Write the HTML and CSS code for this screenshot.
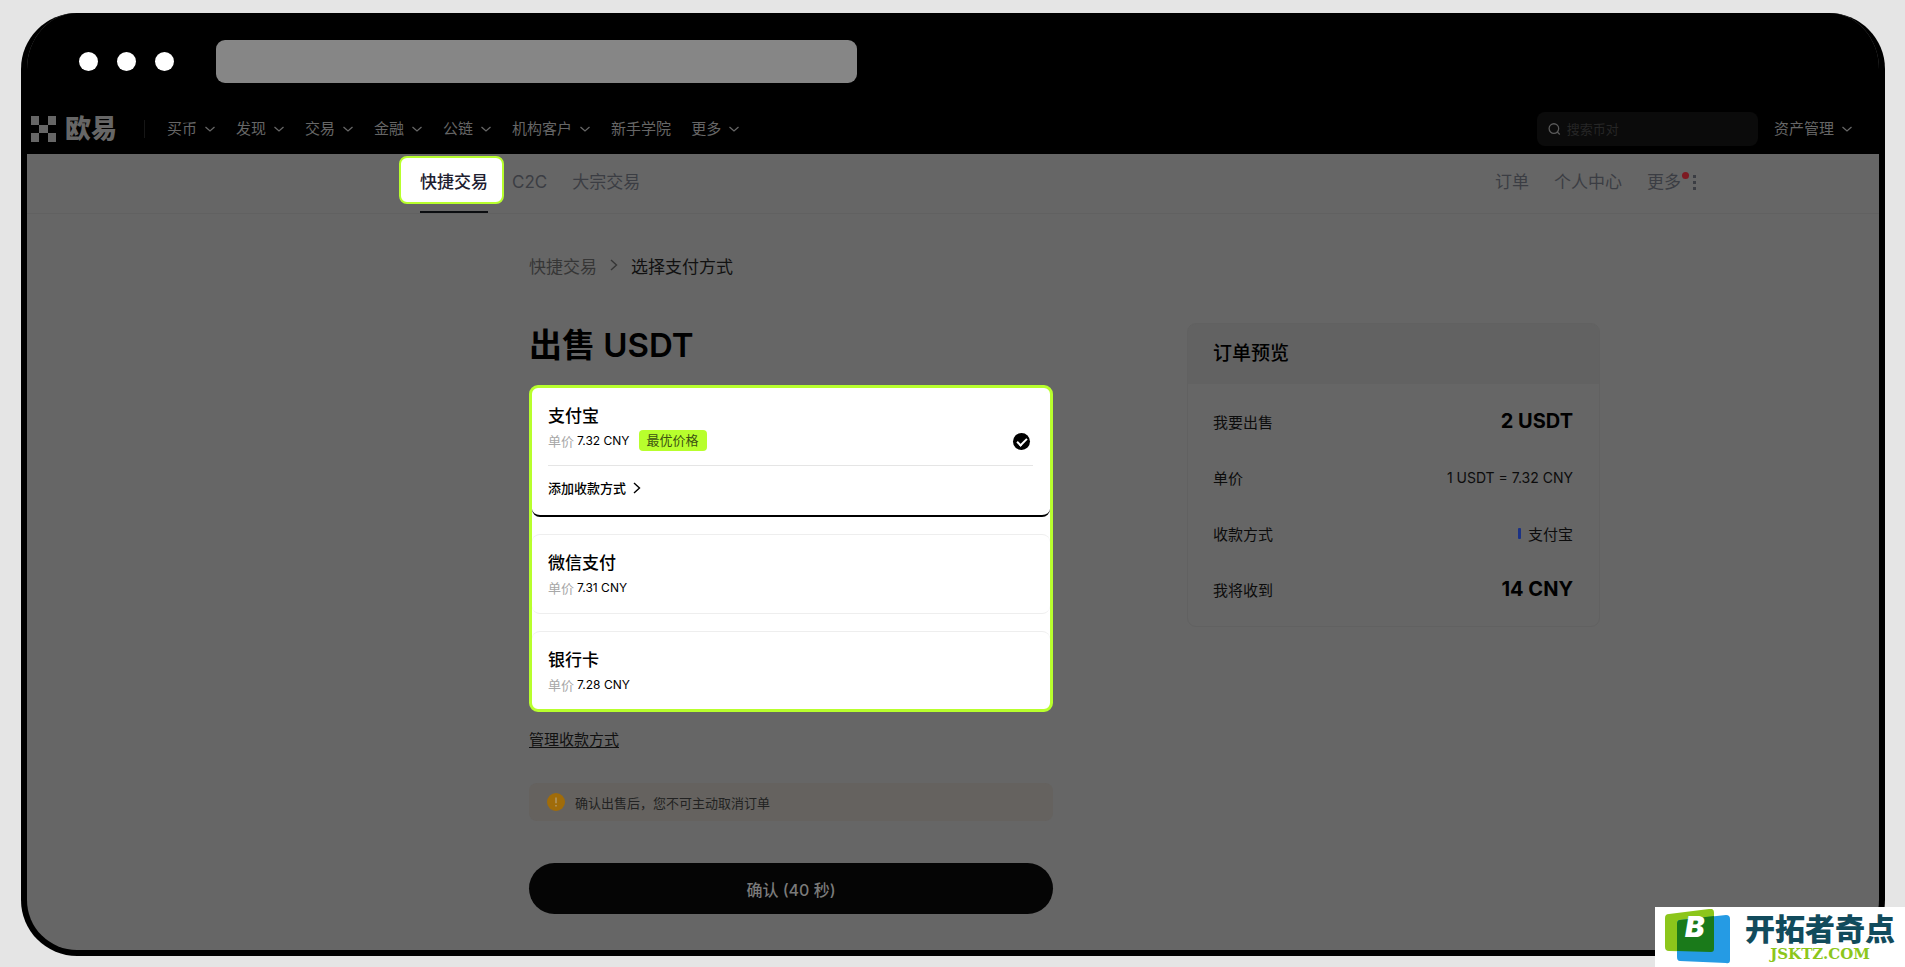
FILE: index.html
```html
<!DOCTYPE html>
<html lang="zh-CN">
<head>
    <meta charset="UTF-8">
    <meta name="viewport" content="width=device-width, initial-scale=1.0">
    <title>出售 USDT</title>
    <link rel="stylesheet" href="styles.css">
</head>
<body>
    <!-- shared icons -->
    <svg class="defs" width="0" height="0">
        <symbol id="down" viewBox="0 0 12 12"><path d="M1.5 4 L6 8 L10.5 4" fill="none" stroke="currentColor" stroke-width="1.3"/></symbol>
        <symbol id="right" viewBox="0 0 12 12"><path d="M3 1 L8.5 6 L3 11" fill="none" stroke="currentColor" stroke-width="1.4"/></symbol>
    </svg>

    <div class="browser">
        <div class="chrome">
            <span class="dot"></span>
            <span class="dot"></span>
            <span class="dot"></span>
            <div class="address"></div>
        </div>

        <header class="topnav">
            <a class="logo" href="#">
                <svg width="25" height="26" viewBox="0 0 25 26" fill="currentColor">
                    <rect x="0" y="0" width="8" height="9"/>
                    <rect x="17" y="0" width="8" height="9"/>
                    <rect x="8" y="9" width="9" height="8"/>
                    <rect x="0" y="17" width="8" height="9"/>
                    <rect x="17" y="17" width="8" height="9"/>
                </svg>
                欧易
            </a>
            <nav class="menu">
                <a href="#">买币<svg><use href="#down"/></svg></a>
                <a href="#">发现<svg><use href="#down"/></svg></a>
                <a href="#">交易<svg><use href="#down"/></svg></a>
                <a href="#">金融<svg><use href="#down"/></svg></a>
                <a href="#">公链<svg><use href="#down"/></svg></a>
                <a href="#">机构客户<svg><use href="#down"/></svg></a>
                <a href="#">新手学院</a>
                <a href="#">更多<svg><use href="#down"/></svg></a>
            </nav>
            <label class="search">
                <svg width="14" height="14" viewBox="0 0 14 14" fill="none" stroke="currentColor" stroke-width="1.4"><circle cx="6.5" cy="6.5" r="5.3"/><path d="M10.3 10.3 L13 13"/></svg>
                <input type="text" placeholder="搜索币对" aria-label="搜索币对">
            </label>
            <nav class="menu">
                <a href="#">资产管理<svg><use href="#down"/></svg></a>
            </nav>
        </header>

        <div class="subnav">
            <nav class="tabs">
                <a class="active" href="#">快捷交易</a>
                <a href="#">C2C</a>
                <a href="#">大宗交易</a>
            </nav>
            <nav class="links">
                <a href="#">订单</a>
                <a href="#">个人中心</a>
                <a class="more" href="#">更多<svg width="3" height="15" viewBox="0 0 3 15" fill="currentColor"><rect width="3" height="3"/><rect y="6" width="3" height="3"/><rect y="12" width="3" height="3"/></svg></a>
            </nav>
        </div>

        <main>
            <div class="crumbs">
                <a href="#">快捷交易</a>
                <svg><use href="#right"/></svg>
                <span>选择支付方式</span>
            </div>
            <div class="columns">
                <form class="sell">
                    <h1>出售 USDT</h1>
                    <div class="methods">
                        <div class="method selected">
                            <label for="alipay">
                                <span class="name">支付宝</span>
                                <span class="price"><i>单价</i>7.32 CNY<b>最优价格</b></span>
                            </label>
                            <input type="radio" name="method" id="alipay" checked>
                            <a class="add" href="#">添加收款方式<svg><use href="#right"/></svg></a>
                        </div>
                        <div class="method">
                            <label for="wechat">
                                <span class="name">微信支付</span>
                                <span class="price"><i>单价</i>7.31 CNY</span>
                            </label>
                            <input type="radio" name="method" id="wechat">
                        </div>
                        <div class="method">
                            <label for="bank">
                                <span class="name">银行卡</span>
                                <span class="price"><i>单价</i>7.28 CNY</span>
                            </label>
                            <input type="radio" name="method" id="bank">
                        </div>
                    </div>
                    <a class="manage" href="#">管理收款方式</a>
                    <div class="notice">
                        <svg width="18" height="18" viewBox="0 0 18 18"><circle cx="9" cy="9" r="9" fill="#a06c0a"/><path d="M9 4.5 V10.3 M9 12 V13.5" stroke="#b39a6c" stroke-width="1.4"/></svg>
                        确认出售后，您不可主动取消订单
                    </div>
                    <button type="submit">确认 (40 秒)</button>
                </form>

                <section class="preview">
                    <h2>订单预览</h2>
                    <dl>
                        <div><dt>我要出售</dt><dd class="big">2 USDT</dd></div>
                        <div><dt>单价</dt><dd>1 USDT = 7.32 CNY</dd></div>
                        <div><dt>收款方式</dt><dd class="pay">支付宝</dd></div>
                        <div><dt>我将收到</dt><dd class="big">14 CNY</dd></div>
                    </dl>
                </section>
            </div>
        </main>
    </div>

    <a class="watermark" href="#">
        <svg width="66" height="56" viewBox="0 0 66 56">
            <path d="M4 5 L44 0 Q49 -1 49 4 V40 Q49 43 46 43 L4 42 Q0 42 0 38 V9 Q0 5 4 5Z" fill="#8cc61b"/>
            <path d="M15 11 L61 6 Q65 6 65 10 V51 Q65 55 61 54 L15 52 Q12 52 12 48 V15 Q12 11 15 11Z" fill="#259be4"/>
            <path d="M15 11 L49 7 V40 Q49 43 46 43 L12 42 V15 Q12 11 15 11Z" fill="#1a7a1a"/>
            <text x="20" y="28" class="mark">B</text>
        </svg>
        <span>
            <strong>开拓者奇点</strong>
            <em>JSKTZ.COM</em>
        </span>
    </a>
</body>
</html>
```

FILE: styles.css
```css
* { box-sizing: border-box; }
body {
    margin: 0;
    padding: 13px 20px 11px 21px;
    background: #e5e5e5;
    font-family: Inter, "Noto Sans CJK SC", sans-serif;
    color: #000;
}
a { color: inherit; text-decoration: none; }
.defs { position: absolute; }

.browser {
    min-height: calc(100vh - 24px);
    border: 6px solid #000;
    border-top: 0;
    border-radius: 56px;
    background: #666;
    overflow: hidden;
}

/* window bar */
.chrome {
    display: flex;
    align-items: center;
    gap: 19px;
    height: 89px;
    padding: 8px 52px 0;
    background: #000;
}
.dot { width: 19px; height: 19px; border-radius: 50%; background: #fff; }
.address {
    width: 641px;
    height: 43px;
    margin-left: 23px;
    border-radius: 9px;
    background: #868686;
}

/* site header */
.topnav {
    display: flex;
    align-items: center;
    height: 52px;
    padding: 2px 26px 0 4px;
    background: #000;
    color: #666;
    font-size: 15px;
}
.logo {
    display: flex;
    align-items: center;
    gap: 9px;
    margin-right: 27px;
    font-size: 26px;
    font-weight: 900;
    line-height: 26px;
}
.menu { display: flex; gap: 20px; line-height: 18px; }
.menu a { display: flex; align-items: center; gap: 7px; }
.menu svg { width: 12px; height: 12px; }
.logo + .menu { padding-left: 22px; border-left: 1px solid #161616; }
.search {
    display: flex;
    align-items: center;
    gap: 6px;
    width: 221px;
    height: 34px;
    margin: 0 16px 0 auto;
    padding: 0 11px;
    border-radius: 8px;
    background: #0b0b0b;
    color: #5a5a5a;
}
.search input {
    width: 100%;
    padding: 0;
    border: 0;
    outline: 0;
    background: none;
    color: #666;
    font: inherit;
    font-size: 13px;
}
.search input::placeholder { color: #262626; }

/* second row of tabs */
.subnav {
    display: flex;
    justify-content: space-between;
    height: 60px;
    padding: 2px 183px 0 372px;
    border-bottom: 1px solid #616161;
    color: #3b3d43;
    font-size: 17px;
    line-height: 52px;
}
.tabs, .links { display: flex; gap: 25px; }
.tabs .active {
    position: relative;
    height: 48px;
    margin-right: -17px;
    padding: 0 14px 0 19px;
    border: 2px solid #b8ff2d;
    border-radius: 8px;
    background: #fff;
    color: #1e2030;
    font-weight: 500;
    line-height: 48px;
}
.tabs .active::after {
    content: "";
    position: absolute;
    left: 19px;
    bottom: -11px;
    width: 68px;
    height: 2px;
    background: #0b0d10;
}
.more { position: relative; display: flex; align-items: center; gap: 12px; height: 52px; }
.more::after {
    content: "";
    position: absolute;
    right: 7px;
    top: 16px;
    width: 7px;
    height: 7px;
    border-radius: 50%;
    background: #7d1a22;
}

main { max-width: 1573px; padding: 37px 0 36px 502px; }
.crumbs {
    display: flex;
    align-items: center;
    gap: 11px;
    height: 28px;
    font-size: 17px;
    color: #363636;
}
.crumbs svg { width: 12px; height: 14px; }
.crumbs span { color: #111; }
.columns {
    display: flex;
    align-items: flex-start;
    justify-content: space-between;
    padding-top: 44px;
}

.sell { width: 524px; }
h1 { margin: 0 0 18px; font-size: 33px; font-weight: 600; line-height: 44px; }
.methods {
    border: 3px solid #b8ff2d;
    border-radius: 9px;
    background: #fff;
    overflow: hidden;
}
.method {
    display: grid;
    grid-template-columns: 1fr auto;
    align-items: end;
    align-content: start;
    height: 80px;
    padding: 14px 17px 0 16px;
    border: 1px solid #eee;
    border-width: 1px 0;
    border-radius: 8px;
}
.method + .method { margin-top: 17px; }
.method:last-child { height: 78px; border-bottom: 0; }
.method.selected { height: 129px; border: 0; border-bottom: 2px solid #000; }
.name { display: block; font-size: 17px; font-weight: 500; line-height: 28px; }
.price { display: flex; align-items: center; height: 21px; font-size: 12px; }
.price i { margin-right: 3px; color: #a8a8a8; font-size: 13px; font-style: normal; }
.price b {
    margin-left: 9px;
    padding: 0 8px;
    border-radius: 4px;
    background: #b8ff2d;
    color: #3c5212;
    font-size: 13px;
    font-weight: 400;
    line-height: 21px;
}
.method input {
    appearance: none;
    display: grid;
    place-items: center;
    width: 17px;
    height: 17px;
    margin: 0 3px 1px 0;
    border-radius: 50%;
}
.method input:checked { background: #000; }
.method input:checked::before {
    content: "";
    width: 8px;
    height: 4px;
    margin-bottom: 2px;
    border: solid #fff;
    border-width: 0 0 2px 2px;
    transform: rotate(-45deg);
}
.add {
    display: flex;
    grid-column: 1 / 3;
    align-items: center;
    gap: 5px;
    height: 44px;
    margin-top: 14px;
    border-top: 1px solid #e5e5e5;
    font-size: 13px;
    font-weight: 500;
}
.add svg { width: 12px; height: 12px; }
.manage {
    display: block;
    margin: 17px 0 33px;
    color: #111;
    font-size: 15px;
    line-height: 21px;
    text-decoration: underline;
    text-underline-offset: 2px;
}
.notice {
    display: flex;
    align-items: center;
    gap: 10px;
    height: 38px;
    padding: 0 18px;
    border-radius: 8px;
    background: #65625f;
    color: #222;
    font-size: 13px;
}
.sell button {
    display: block;
    width: 100%;
    height: 51px;
    margin-top: 42px;
    border: 0;
    border-radius: 26px;
    background: #050505;
    color: #7a7a7a;
    font: inherit;
    font-size: 16px;
    font-weight: 500;
}

/* order summary */
.preview {
    width: 413px;
    border: 1px solid #616161;
    border-radius: 9px;
    overflow: hidden;
}
.preview h2 {
    margin: 0;
    padding: 0 25px;
    background: #626262;
    font-size: 19px;
    font-weight: 500;
    line-height: 60px;
}
.preview dl { margin: 0; padding: 9px 26px 9px 25px; }
.preview dl div {
    display: flex;
    align-items: center;
    justify-content: space-between;
    height: 56px;
    color: #0c0c0c;
    font-size: 15px;
}
.preview dd { margin: 0; font-size: 14px; }
.preview dd.big { color: #000; font-size: 20px; font-weight: 700; }
.preview dd.pay { display: flex; align-items: center; gap: 7px; font-size: 15px; }
.pay::before { content: ""; width: 3px; height: 11px; border-radius: 1px; background: #1b3285; }

.watermark {
    position: fixed;
    right: 0;
    bottom: 0;
    display: flex;
    align-items: center;
    gap: 14px;
    width: 250px;
    height: 60px;
    padding-left: 10px;
    background: #fff;
    text-align: center;
}
.watermark strong {
    display: block;
    color: #114b5c;
    font-size: 30px;
    font-weight: 900;
    line-height: 34px;
}
.watermark em {
    display: block;
    color: #8cc61b;
    font: bold 15px/16px "DejaVu Serif", serif;
}
.mark { fill: #fff; font: italic 900 29px Inter, sans-serif; }
```
